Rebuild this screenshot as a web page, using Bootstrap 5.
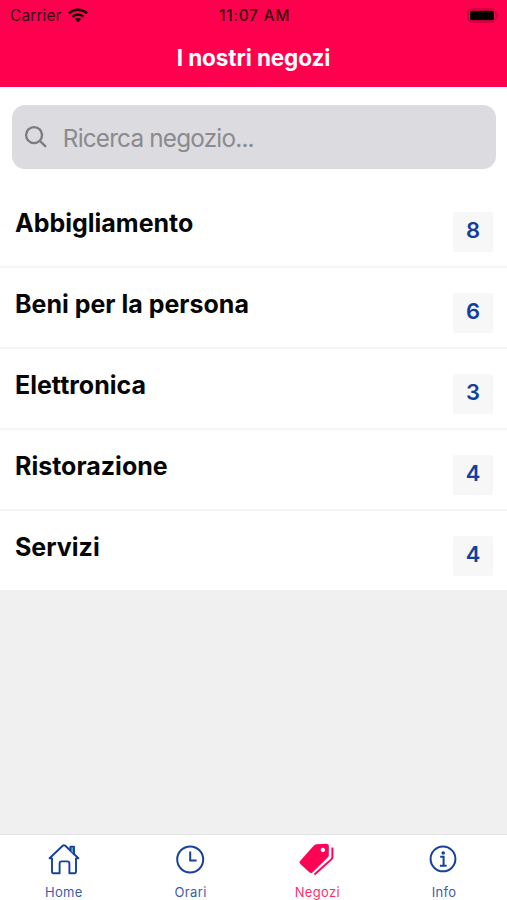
<!DOCTYPE html>
<html lang="it">
<head>
<meta charset="utf-8">
<meta name="viewport" content="width=device-width, initial-scale=1">
<title>I nostri negozi</title>
<link href="https://cdn.jsdelivr.net/npm/bootstrap@5.3.0/dist/css/bootstrap.min.css" rel="stylesheet">
<style>
body { font-family: Inter, "Liberation Sans", sans-serif; background: #f0f0f0; color: #060606; height: 900px; overflow: hidden; }
.app-header { background: #ff004f; height: 87px; flex: none; }
.status-bar { height: 30px; padding: 1px 8px 0 10px; color: #35000f; font-size: 15.5px; line-height: 30px; }
.status-side { flex: 1 1 0; }
.carrier { letter-spacing: .1px; margin-right: 6px; }
.clock-text { font-weight: 500; letter-spacing: .7px; }
.screen-title { font-size: 22.5px; font-weight: 650; line-height: 30px; padding-top: 13px; letter-spacing: -.1px; }
.search-area { padding: 18px 11px 17px 12px; }
.search-box { height: 64px; background: #dcdbe0; border-radius: 13px; padding-left: 12px; }
.search-box .form-control { font-size: 24.3px; letter-spacing: -.8px; padding: 1px 0 0 16px; height: 64px; }
.search-box .form-control::placeholder { color: #8b8a8e; opacity: 1; }
.shop-row { height: 81px; border: 0; border-bottom: 2px solid #f5f5f5 !important; padding: 0 14px 0 15px; color: #060606; }
.shop-row:last-child { height: 79px; border-bottom: 0 !important; }
.shop-list { margin-top: 1px; }
.shop-name { font-size: 25px; font-weight: 650; line-height: 32px; padding-top: 20px; letter-spacing: 0; }
.shop-count { width: 40px; height: 40px; margin-top: 25px; background: #f7f7f7; color: #123f9c; font-size: 22px; font-weight: 600; line-height: 37px; border-radius: 2px; }
.tab-bar { height: 66px; background: #fff; border-top: 1px solid #e3e3e3; }
.tab-bar .nav-link { color: #164299; padding: 5px 0 0 1px; font-size: 13px; line-height: 18px; letter-spacing: .35px; }
.tab-bar .nav-link.active { color: #ff0455; }
.tab-bar svg { display: block; margin: 0 auto 5px; }
.tab-label { opacity: .85; }
</style>
<script src="https://cdn.jsdelivr.net/npm/bootstrap@5.3.0/dist/js/bootstrap.bundle.min.js"></script>
</head>
<body class="d-flex flex-column">
<header class="app-header">
  <div class="status-bar d-flex align-items-center">
    <div class="status-side d-flex align-items-center">
      <span class="carrier">Carrier</span>
      <svg width="20" height="15" viewBox="0 0 20 15" fill="none" stroke="#160006" stroke-width="2.6"><path d="M1 5.3C6 .5 14 .5 19 5.3M4.3 8.7C7.6 5.7 12.4 5.7 15.7 8.7"/><path d="M10 14.2L6.8 11.1C8.6 9.5 11.4 9.5 13.2 11.1Z" fill="#160006" stroke="none"/></svg>
    </div>
    <span class="clock-text">11:07 AM</span>
    <div class="status-side d-flex justify-content-end">
      <svg width="33" height="16" viewBox="0 0 33 16"><rect x="2" y="1" width="28" height="13" rx="4" fill="none" stroke="#b00036" stroke-width="1.2"/><rect x="4" y="2.8" width="24" height="9.4" rx="2" fill="#000"/><path d="M31.6 5.4c1.3.8 1.3 3.4 0 4.2z" fill="#b00036"/></svg>
    </div>
  </div>
  <h1 class="screen-title text-white text-center m-0">I nostri negozi</h1>
</header>

<main class="flex-grow-1">
  <div class="bg-white">
    <div class="search-area">
      <div class="search-box d-flex align-items-center">
        <svg width="24" height="24" viewBox="0 0 24 24" fill="none" stroke="#7d7c80" stroke-width="2.5" stroke-linecap="round"><circle cx="10.6" cy="10" r="8.4"/><path d="M16.8 16.2l5.6 5.4"/></svg>
        <input class="form-control border-0 bg-transparent shadow-none" type="search" placeholder="Ricerca negozio...">
      </div>
    </div>
    <div class="shop-list list-group list-group-flush">
      <a href="#" class="shop-row list-group-item d-flex justify-content-between align-items-start"><span class="shop-name">Abbigliamento</span><span class="shop-count text-center">8</span></a>
      <a href="#" class="shop-row list-group-item d-flex justify-content-between align-items-start"><span class="shop-name">Beni per la persona</span><span class="shop-count text-center">6</span></a>
      <a href="#" class="shop-row list-group-item d-flex justify-content-between align-items-start"><span class="shop-name">Elettronica</span><span class="shop-count text-center">3</span></a>
      <a href="#" class="shop-row list-group-item d-flex justify-content-between align-items-start"><span class="shop-name">Ristorazione</span><span class="shop-count text-center">4</span></a>
      <a href="#" class="shop-row list-group-item d-flex justify-content-between align-items-start"><span class="shop-name">Servizi</span><span class="shop-count text-center">4</span></a>
    </div>
  </div>
</main>

<nav class="tab-bar nav nav-fill flex-nowrap">
  <a class="nav-link col-3" href="#">
    <svg width="36" height="38" viewBox="0 0 36 38" fill="none" stroke="#164299" stroke-width="1.9" stroke-linejoin="round" stroke-linecap="round"><path d="M6 18.4L3.6 18.3L16.7 5.7Q18 4.7 19.3 5.7L32.4 18.3L30 18.4V32Q30 33.2 28.8 33.2H23.4V23.6Q23.4 21.4 21.2 21.4H15.8Q13.6 21.4 13.6 23.6V33.2H7.2Q6 33.2 6 32Z"/><path d="M24.4 10.4V6.6H28V13.8" fill="#6f9fc9"/></svg>
    <span class="tab-label d-block">Home</span>
  </a>
  <a class="nav-link col-3" href="#">
    <svg width="36" height="38" viewBox="0 0 36 38" fill="none" stroke="#164299" stroke-width="2"><circle cx="17.2" cy="19.5" r="13"/><path d="M17.2 11.6V20.5H23.6"/></svg>
    <span class="tab-label d-block">Orari</span>
  </a>
  <a class="nav-link col-3 active" href="#">
    <svg width="36" height="38" viewBox="0 0 36 38"><path fill-rule="evenodd" fill="#ff0455" d="M17.3 4.2L27.1 3.7Q29.8 3.8 29.9 6.5L29.8 15.4Q29.7 16.6 28.7 17.6L13.5 32.4Q11.9 33.7 10.3 32.3L1.4 24.1Q-.2 22.4 1.3 20.8L14.7 5.7Q15.9 4.3 17.3 4.2ZM23.9 7.8a2.2 2.2 0 1 0 .01 0Z"/><path d="M33.4 7.5V17.2Q33.3 18.4 32.3 19.4L15.5 34.6" fill="none" stroke="#ff0455" stroke-width="2"/></svg>
    <span class="tab-label d-block">Negozi</span>
  </a>
  <a class="nav-link col-3" href="#">
    <svg width="36" height="38" viewBox="0 0 36 38" fill="none" stroke="#164299" stroke-width="2"><circle cx="17" cy="18.9" r="12.4"/><path d="M14.2 16.8H17.6V25.6M14 25.7H20.6"/><circle cx="17.2" cy="13" r="1.8" fill="#164299" stroke="none"/></svg>
    <span class="tab-label d-block">Info</span>
  </a>
</nav>
</body>
</html>
